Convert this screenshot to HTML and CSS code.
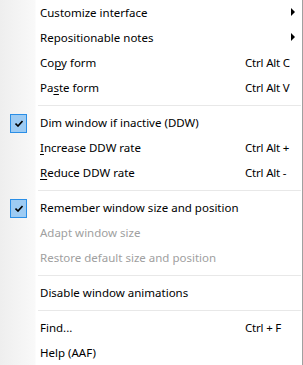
FILE: index.html
```html
<!DOCTYPE html>
<html lang="en">
<head>
    <meta charset="UTF-8">
    <title>Context menu</title>
    <link rel="stylesheet" href="styles.css">
</head>
<body>
    <div class="menu">
        <div class="item">
            <span class="gutter"></span>
            <span class="label">Customize interface</span>
            <span class="keys"></span>
            <span class="arrow"></span>
        </div>
        <div class="item">
            <span class="gutter"></span>
            <span class="label">Repositionable notes</span>
            <span class="keys"></span>
            <span class="arrow"></span>
        </div>
        <div class="item">
            <span class="gutter"></span>
            <span class="label">Co<u>p</u>y form</span>
            <span class="keys">Ctrl Alt C</span>
            <span></span>
        </div>
        <div class="item">
            <span class="gutter"></span>
            <span class="label">Pa<u>s</u>te form</span>
            <span class="keys">Ctrl Alt V</span>
            <span></span>
        </div>

        <div class="separator"></div>

        <div class="item">
            <span class="gutter">
                <span class="check">
                    <svg viewBox="0 0 8 7"><path d="M0.5 3.5 L3 6 L7.5 1"></path></svg>
                </span>
            </span>
            <span class="label">Dim window if inactive (DDW)</span>
            <span class="keys"></span>
            <span></span>
        </div>
        <div class="item">
            <span class="gutter"></span>
            <span class="label"><u>I</u>ncrease DDW rate</span>
            <span class="keys">Ctrl Alt +</span>
            <span></span>
        </div>
        <div class="item">
            <span class="gutter"></span>
            <span class="label"><u>R</u>educe DDW rate</span>
            <span class="keys">Ctrl Alt -</span>
            <span></span>
        </div>

        <div class="separator"></div>

        <div class="item">
            <span class="gutter">
                <span class="check">
                    <svg viewBox="0 0 8 7"><path d="M0.5 3.5 L3 6 L7.5 1"></path></svg>
                </span>
            </span>
            <span class="label">Remember window size and position</span>
            <span class="keys"></span>
            <span></span>
        </div>
        <div class="item disabled">
            <span class="gutter"></span>
            <span class="label">Adapt window size</span>
            <span class="keys"></span>
            <span></span>
        </div>
        <div class="item disabled">
            <span class="gutter"></span>
            <span class="label">Restore default size and position</span>
            <span class="keys"></span>
            <span></span>
        </div>

        <div class="separator"></div>

        <div class="item">
            <span class="gutter"></span>
            <span class="label">Disable window animations</span>
            <span class="keys"></span>
            <span></span>
        </div>

        <div class="separator"></div>

        <div class="item">
            <span class="gutter"></span>
            <span class="label">Find...</span>
            <span class="keys">Ctrl + F</span>
            <span></span>
        </div>
        <div class="item">
            <span class="gutter"></span>
            <span class="label">Help (AAF)</span>
            <span class="keys"></span>
            <span></span>
        </div>
    </div>
</body>
</html>
```

FILE: styles.css
```css
/* Windows style context menu */
body {
    margin: 0;
    background: #ffffff;
    font-family: 'Noto Sans', 'Open Sans', sans-serif;
    font-size: 11.5px;
    color: #000000;
}

.menu {
    width: 303px;
    height: 365px;
    box-sizing: border-box;
    display: flex;
    flex-direction: column;
    border-right: 1px solid #a0a0a0;
    background:
        linear-gradient(to right, #eeeeee 0px, #f9f9f9 35px, #ffffff 36px) no-repeat;
    background-size: 36px 100%;
    background-color: #ffffff;
}

.item {
    display: grid;
    grid-template-columns: 40px 205px 45px 12px;
    align-items: center;
    height: 25px;
    white-space: nowrap;
}

.item.disabled {
    color: #a0a0a0;
}

.label u {
    text-underline-offset: 2px;
}

.keys {
    letter-spacing: -0.2px;
}

.arrow {
    width: 0;
    height: 0;
    border-top: 4px solid transparent;
    border-bottom: 4px solid transparent;
    border-left: 4px solid #000000;
    margin-left: 1px;
    margin-top: -1px;
}

.separator {
    height: 10px;
    display: flex;
    align-items: center;
    padding-left: 38px;
    padding-right: 1px;
}

.separator::after {
    content: '';
    flex: 1;
    height: 1px;
    background: #e8e8e8;
}

/* checked state box */
.gutter {
    height: 25px;
    display: flex;
    align-items: center;
}

.check {
    width: 17px;
    height: 19px;
    box-sizing: border-box;
    margin-left: 10px;
    margin-top: 1px;
    border: 1px solid #2a8ee6;
    background: #9dcbf3;
    display: flex;
    align-items: center;
    justify-content: center;
}

.check svg {
    width: 8px;
    height: 7px;
    fill: none;
    stroke: #000000;
    stroke-width: 1.6;
}
```
